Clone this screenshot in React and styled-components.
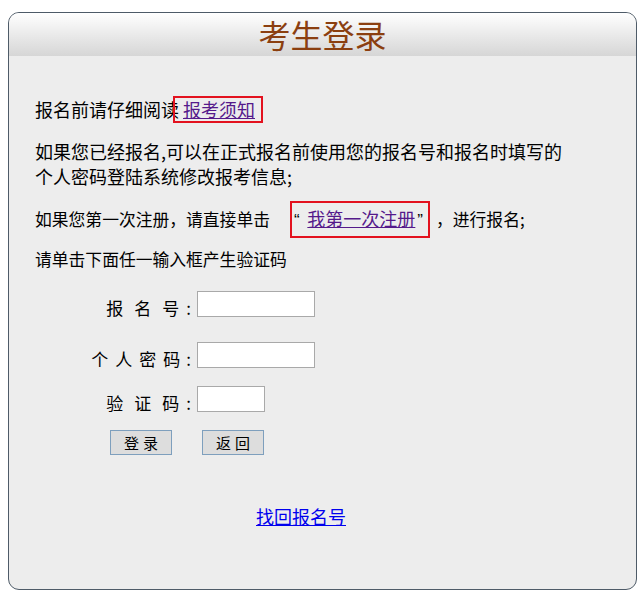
import React from 'react';
import styled, { createGlobalStyle } from 'styled-components';

const GlobalStyle = createGlobalStyle`
  body {
    margin: 0;
    background: #ffffff;
    font-family: "Noto Sans CJK SC", "Liberation Sans", sans-serif;
    color: #000;
  }
`;

const Panel = styled.div`
  box-sizing: border-box;
  margin: 12px 0 0 8px;
  width: 629px;
  height: 578px;
  border: 1px solid #4e5b68;
  border-radius: 11px;
  background: #ededed;
  overflow: hidden;
`;

const Header = styled.div`
  height: 43px;
  background: linear-gradient(to bottom, #ffffff 0%, #e6e6e6 60%, #d6d6d6 100%);
  display: flex;
  align-items: center;
  justify-content: center;
`;

const Title = styled.h1`
  margin: 0;
  font-size: 32px;
  font-weight: normal;
  color: #8b3f10;
  line-height: 43px;
`;

const Body = styled.div`
  padding: 41px 0 0 26px;
`;

const P = styled.p`
  margin: 0 0 ${p => p.$gap ?? 17}px 0;
  font-size: ${p => p.$size || 18}px;
  line-height: 25px;
`;

// red frame round a link; negative vertical margins keep the line box height
const Boxed = styled.span`
  display: inline-block;
  border: 2px solid #e3121f;
  line-height: ${p => p.$tall ? 30 : 23}px;
  margin: ${p => p.$tall ? '-5px 6px -5px 20px' : '-2px 0 -2px -6px'};
  padding: ${p => p.$tall ? '0 5px 0 2px' : '0 6px 0 8px'};
`;

const Quote = styled.span`
  font-family: "Liberation Sans", sans-serif;
  font-size: 17px;
`;

const VisitedLink = styled.a`
  color: #551a8b;
  text-decoration: underline;
  font-size: 18px;
  margin: 0 ${p => p.$pad || 0}px 0 ${p => p.$pad ? 3 : 0}px;
`;

const Form = styled.div`
  margin-top: 19px;
  padding-left: 53px;
`;

const Row = styled.div`
  display: flex;
  align-items: center;
  height: 26px;
  margin-top: ${p => p.$mt || 0}px;
`;

const Label = styled.label`
  width: 103px;
  text-align: right;
  font-size: 17px;
  line-height: 26px;
  margin-top: 8px;
  white-space: nowrap;
`;

const Spread = styled.span`
  letter-spacing: ${p => p.$spread}px;
`;

const Input = styled.input`
  box-sizing: border-box;
  margin: 0 0 0 6px;
  width: ${p => p.$w || 118}px;
  height: 26px;
  border: 1px solid #a9a9a9;
  background: #fff;
  padding: 0 2px;
`;

const Buttons = styled.div`
  display: flex;
  gap: 30px;
  margin: 18px 0 0 22px;
`;

const Button = styled.button`
  box-sizing: border-box;
  width: 62px;
  height: 25px;
  border: 1px solid #7e9fbd;
  background: #dddddd;
  font-family: "Noto Sans CJK SC", sans-serif;
  font-size: 15px;
  letter-spacing: 4px;
  padding: 0 0 0 4px;
  line-height: 23px;
`;

const Footer = styled.div`
  margin: 48px 0 0 221px;
  font-size: 18px;
`;

const BlueLink = styled.a`
  color: #0000ee;
  text-decoration: underline;
`;

export default function App() {
  return (
    <>
      <GlobalStyle />
      <Panel>
        <Header>
          <Title>考生登录</Title>
        </Header>
        <Body>
          <P>
            报名前请仔细阅读
            <Boxed>
              <VisitedLink href="#">报考须知</VisitedLink>
            </Boxed>
          </P>
          <P>
            如果您已经报名,可以在正式报名前使用您的报名号和报名时填写的
            <br />
            个人密码登陆系统修改报考信息;
          </P>
          <P $size={16.8} $gap={14}>
            如果您第一次注册，请直接单击
            <Boxed $tall>
              <Quote>“ </Quote>
              <VisitedLink href="#" $pad={2}>我第一次注册</VisitedLink>
              <Quote>”</Quote>
            </Boxed>
            ，进行报名;
          </P>
          <P $size={16.8} $gap={0}>请单击下面任一输入框产生验证码</P>
          <Form>
            <Row>
              <Label><Spread $spread={11}>报名</Spread><Spread $spread={7}>号</Spread>:</Label>
              <Input type="text" />
            </Row>
            <Row $mt={25}>
              <Label><Spread $spread={7}>个人密</Spread><Spread $spread={6}>码</Spread>:</Label>
              <Input type="text" />
            </Row>
            <Row $mt={18}>
              <Label><Spread $spread={11}>验证</Spread><Spread $spread={7}>码</Spread>:</Label>
              <Input type="text" $w={68} />
            </Row>
            <Buttons>
              <Button>登录</Button>
              <Button>返回</Button>
            </Buttons>
          </Form>
          <Footer>
            <BlueLink href="#">找回报名号</BlueLink>
          </Footer>
        </Body>
      </Panel>
    </>
  );
}
